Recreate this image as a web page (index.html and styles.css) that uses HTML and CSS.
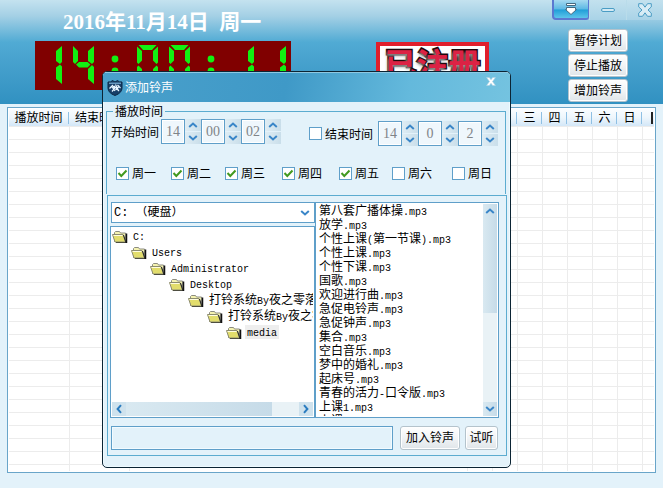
FILE: index.html
```html
<!DOCTYPE html>
<html lang="zh-CN">
<head>
<meta charset="utf-8">
<title>打铃系统</title>
<link rel="stylesheet" href="styles.css">
</head>
<body>
<svg class="defs" aria-hidden="true">
  <symbol id="up" viewBox="0 0 10 6"><path d="M1.200 5 5 1.600 8.800 5" fill="none" stroke="#3a86c8" stroke-width="2"/></symbol>
  <symbol id="down" viewBox="0 0 10 6"><path d="M1.200 1 5 4.400 8.800 1" fill="none" stroke="#3a86c8" stroke-width="2"/></symbol>
  <symbol id="left" viewBox="0 0 6 10"><path d="M5 1.200 1.600 5 5 8.800" fill="none" stroke="#2a7cc0" stroke-width="2"/></symbol>
  <symbol id="right" viewBox="0 0 6 10"><path d="M1 1.200 4.400 5 1 8.800" fill="none" stroke="#2a7cc0" stroke-width="2"/></symbol>
  <symbol id="folder" viewBox="0 0 16 13">
    <path d="M2.500 11.500v-9l1-1h4l1 1.500h5v9z" fill="#f4f2b0" stroke="#8c8c80"/>
    <path d="M14.500 3.500V12.500H4" fill="none" stroke="#111" stroke-width="1.500"/>
    <path d="M.5 4.500h10.500l2.500 7.500H3z" fill="#e2dd6c" stroke="#8c8c70"/>
    <path d="M1.500 5.500h9" stroke="#fffde0"/>
    <path d="M11.500 5l2.300 7" stroke="#222"/>
  </symbol>
  <symbol id="colon" viewBox="0 0 22 40"><circle cx="10" cy="14" r="3.400"/><circle cx="10" cy="26" r="3.400"/></symbol>
  <symbol id="one" viewBox="0 0 22 40"><path d="M21 1v16l-2 2-4-3V6zM19 19.500l2 2V39l-6-5V22.500z"/></symbol>
  <symbol id="four" viewBox="0 0 22 40"><path d="M21 1v16l-2 2-4-3V6zM19 20l2 2V39l-6-5V24zM0 1l5 5v10l-3 3-2-2zM6 17h8.500l3 2.500-3 3H6l-3-3z"/></symbol>
  <symbol id="zero" viewBox="0 0 22 40"><path d="M1.500 0h18L15 5H6zM0 1.500 5 6v9.500l-3.500 3.500L0 17.500zM21 1.500v16l-1.500 1.500-3.500-3.500V6zM1.500 20.500 5 24v9.500L0 38V22zM19.500 20.500 21 22v16l-5-4.500V24zM6 35h9l4.500 5h-18z"/></symbol>
</svg>

<header class="banner">
  <div class="clock">
    <h1 class="date">2016年11月14日&nbsp;&nbsp;周一</h1>
    <svg class="led" viewBox="0 0 256 49" role="img" aria-label="14:00:11">
      <g fill="#12f012">
        <use href="#one" x="6" y="4" width="22" height="40"/>
        <use href="#four" x="38" y="4" width="22" height="40"/>
        <use href="#colon" x="70" y="4" width="22" height="40"/>
        <use href="#zero" x="102" y="4" width="22" height="40"/>
        <use href="#zero" x="134" y="4" width="22" height="40"/>
        <use href="#colon" x="166" y="4" width="22" height="40"/>
        <use href="#one" x="198" y="4" width="22" height="40"/>
        <use href="#one" x="230" y="4" width="22" height="40"/>
      </g>
    </svg>
  </div>
  <div class="stamp">已注册</div>
  <div class="side">
    <div class="winbar">
      <button class="win menu" aria-label="菜单"><svg width="12" height="12" viewBox="0 0 12 12"><path d="M1.500.5h9v2h-9zM1.500 4.500h9v2h1L6 11.500.5 6.500h1z" fill="#fff" stroke="#456a80"/></svg></button>
      <button class="win" aria-label="最小化"><svg width="14" height="4" viewBox="0 0 14 4"><rect x=".5" y=".5" width="13" height="3" rx="1.500" fill="#d4eaf4" stroke="#4a9cc4"/></svg></button>
      <button class="win" aria-label="关闭"><svg width="14" height="14" viewBox="0 0 14 14"><path d="M.7.7h3.800L7 4.200 9.500.7h3.800v3.200L10 7l3.300 3.100v3.200H9.500L7 9.800 4.500 13.300H.7v-3.200L4 7 .7 3.900z" fill="#d8ecf5" stroke="#4a9cc4"/></svg></button>
    </div>
    <div class="actions">
      <button class="btn">暂停计划</button>
      <button class="btn">停止播放</button>
      <button class="btn">增加铃声</button>
    </div>
  </div>
</header>

<main class="panel">
  <table class="plan">
    <colgroup><col class="c-start"><col class="c-end"><col><col class="day"><col class="day"><col class="day"><col class="day"><col class="day"><col class="day"><col class="day"><col class="c-last"></colgroup>
    <thead><tr><th>播放时间</th><th>结束时间</th><th></th><th></th><th></th><th>三</th><th>四</th><th>五</th><th>六</th><th>日</th><th class="caret"></th></tr></thead>
    <tbody><tr><td></td><td></td><td></td><td></td><td></td><td></td><td></td><td></td><td></td><td></td><td></td></tr></tbody>
  </table>
</main>

<section class="dialog" role="dialog" aria-labelledby="dlg-title">
  <div class="titlebar">
    <svg class="shield" width="16" height="16" viewBox="0 0 16 16"><path d="M1 2q3 .5 4.500-1.500L8 2l2.500-1.500Q12 2.500 15 2v6q0 5-7 7.500Q1 13 1 8z" fill="#173f68" stroke="#0c2744"/><path d="M2 3.200h12" stroke="#8cc4e8"/><path d="M2.500 8.500l3-3 2 3-2.500 3M5 7l3 4M8.500 4.500l3 6M12.500 6l-4 4M7 6l5 5M10.500 5l3 3" stroke="#e8f6ff" stroke-width="1.200" fill="none"/></svg>
    <h2 id="dlg-title">添加铃声</h2>
    <button class="close" aria-label="关闭"><svg width="10" height="9" viewBox="0 0 10 9"><path d="M.5.5h2.800L5 2.700 6.700.5h2.800L6.500 4.500l3 4H6.700L5 6.300 3.300 8.500H.5l3-4z" fill="#fff" stroke="#a9d0e2" stroke-width=".6"/></svg></button>
  </div>
  <div class="body">
    <fieldset class="time">
      <legend>播放时间</legend>
      <div class="times">
        <div class="group">
          <label for="sh">开始时间</label>
          <div class="spins">
            <span class="spin"><input id="sh" value="14"><span class="arrows"><button aria-label="加"><svg><use href="#up"/></svg></button><button aria-label="减"><svg><use href="#down"/></svg></button></span></span>
            <span class="spin"><input aria-label="分" value="00"><span class="arrows"><button aria-label="加"><svg><use href="#up"/></svg></button><button aria-label="减"><svg><use href="#down"/></svg></button></span></span>
            <span class="spin"><input aria-label="秒" value="02"><span class="arrows"><button aria-label="加"><svg><use href="#up"/></svg></button><button aria-label="减"><svg><use href="#down"/></svg></button></span></span>
          </div>
        </div>
        <div class="group finish">
          <label class="check"><input type="checkbox">结束时间</label>
          <div class="spins">
            <span class="spin"><input aria-label="时" value="14"><span class="arrows"><button aria-label="加"><svg><use href="#up"/></svg></button><button aria-label="减"><svg><use href="#down"/></svg></button></span></span>
            <span class="spin"><input aria-label="分" value="0"><span class="arrows"><button aria-label="加"><svg><use href="#up"/></svg></button><button aria-label="减"><svg><use href="#down"/></svg></button></span></span>
            <span class="spin"><input aria-label="秒" value="2"><span class="arrows"><button aria-label="加"><svg><use href="#up"/></svg></button><button aria-label="减"><svg><use href="#down"/></svg></button></span></span>
          </div>
        </div>
      </div>
      <div class="days">
        <label class="check"><input type="checkbox" checked>周一</label>
        <label class="check"><input type="checkbox" checked>周二</label>
        <label class="check"><input type="checkbox" checked>周三</label>
        <label class="check"><input type="checkbox" checked>周四</label>
        <label class="check"><input type="checkbox" checked>周五</label>
        <label class="check"><input type="checkbox">周六</label>
        <label class="check"><input type="checkbox">周日</label>
      </div>
    </fieldset>

    <div class="files">
      <div class="browser">
        <div class="source">
          <select class="drive" aria-label="驱动器"><option>C: （硬盘）</option></select>
          <div class="tree">
            <ul>
              <li><svg><use href="#folder"/></svg><span class="name"><span class="en">C:</span></span></li>
              <li><svg><use href="#folder"/></svg><span class="name"><span class="en">Users</span></span></li>
              <li><svg><use href="#folder"/></svg><span class="name"><span class="en">Administrator</span></span></li>
              <li><svg><use href="#folder"/></svg><span class="name"><span class="en">Desktop</span></span></li>
              <li><svg><use href="#folder"/></svg><span class="name">打铃系统<span class="en">By</span>夜之零落</span></li>
              <li><svg><use href="#folder"/></svg><span class="name">打铃系统<span class="en">By</span>夜之零</span></li>
              <li><svg><use href="#folder"/></svg><span class="name picked"><span class="en">media</span></span></li>
            </ul>
            <div class="hscroll">
              <button aria-label="向左"><svg><use href="#left"/></svg></button>
              <div class="thumb"></div>
              <button aria-label="向右"><svg><use href="#right"/></svg></button>
            </div>
          </div>
        </div>
        <div class="songs">
          <ul>
            <li>第八套广播体操<span class="en">.mp3</span></li>
            <li>放学<span class="en">.mp3</span></li>
            <li>个性上课<span class="en">(</span>第一节课<span class="en">).mp3</span></li>
            <li>个性上课<span class="en">.mp3</span></li>
            <li>个性下课<span class="en">.mp3</span></li>
            <li>国歌<span class="en">.mp3</span></li>
            <li>欢迎进行曲<span class="en">.mp3</span></li>
            <li>急促电铃声<span class="en">.mp3</span></li>
            <li>急促钟声<span class="en">.mp3</span></li>
            <li>集合<span class="en">.mp3</span></li>
            <li>空白音乐<span class="en">.mp3</span></li>
            <li>梦中的婚礼<span class="en">.mp3</span></li>
            <li>起床号<span class="en">.mp3</span></li>
            <li>青春的活力<span class="en">-</span>口令版<span class="en">.mp3</span></li>
            <li>上课<span class="en">1.mp3</span></li>
            <li>上课</li>
          </ul>
          <div class="vscroll">
            <button aria-label="向上"><svg><use href="#up"/></svg></button>
            <div class="thumb"></div>
            <button aria-label="向下"><svg><use href="#down"/></svg></button>
          </div>
        </div>
      </div>
      <div class="footer">
        <input class="path" type="text" aria-label="铃声文件">
        <button class="btn">加入铃声</button>
        <button class="btn short">试听</button>
      </div>
    </div>
  </div>
</section>
</body>
</html>
```
FILE: styles.css
```css
* { box-sizing: border-box; }

body {
  margin: 0;
  min-height: 100vh;
  display: flex;
  flex-direction: column;
  position: relative;
  background: #e3f2fa;
  color: #000;
  font: 12px/14px "Noto Sans CJK SC", sans-serif;
}

button, input, select { font: inherit; color: inherit; margin: 0; padding: 0; }
button { border: 0; background: none; display: flex; align-items: center; justify-content: center; }
ul { list-style: none; margin: 0; padding: 0; }
h1, h2 { margin: 0; }
.defs { position: absolute; width: 0; height: 0; }
.en { font-family: "Liberation Mono", monospace; font-size: 10px; }

/* Banner */
.banner {
  display: flex;
  height: 104px;
  padding-left: 35px;
  background: linear-gradient(#c4e2ef 0, #a4d0e5 16px, #51abd4 42px, #48a2ce 60px, #3191c1 104px);
}
.clock { width: 256px; }
.date {
  height: 41px;
  padding: 12px 0 0 28px;
  color: #fff;
  font: bold 21px/20px "Liberation Serif", "Noto Sans CJK SC", serif;
  white-space: nowrap;
}
.led { display: block; width: 100%; height: 49px; background: #800000; }
.stamp {
  width: 113px;
  height: 46px;
  margin: 42px 0 0 85px;
  border: 4px solid #e01f2c;
  background: #fff;
  color: #dc2244;
  font: bold 32px/32px "Noto Sans CJK SC", sans-serif;
  text-align: center;
  white-space: nowrap;
  -webkit-text-stroke: 3px #1c0408;
  paint-order: stroke fill;
  text-shadow: -1px 2px 3px #999;
}
.side { flex: 1; display: flex; flex-direction: column; align-items: flex-end; }
.winbar { display: flex; height: 20px; }
.win { width: 37px; height: 20px; background: linear-gradient(#c3e1ee, #a9d3e7); border-left: 1px solid #b9dcea; }
.win.menu {
  background: linear-gradient(#a6d9f0, #5db9e4 50%, #219fd8 55%, #5cc4ea);
  border: solid #5b78d0;
  border-width: 0 1px 2px 2px;
  border-radius: 0 0 3px 4px;
}
.actions { display: grid; gap: 2px; padding: 9px 35px 0 0; }
.btn {
  width: 60px;
  height: 23px;
  padding-bottom: 2px;
  border: 1px solid #b4c3cc;
  border-radius: 3px;
  background: linear-gradient(#fff, #f1f4f6 50%, #dfe5e9);
  box-shadow: inset 0 0 0 1px #fff;
  white-space: nowrap;
}

/* Schedule */
.panel {
  flex: 1;
  display: flex;
  margin: 3px 7px 16px;
  padding: 1px 1px 1px;
  border: 1px solid #69a5c9;
  background: #fff;
}
.plan { width: 100%; table-layout: fixed; border-collapse: separate; border-spacing: 0; }
.c-start { width: 61px; }
.c-end { width: 60px; }
.day { width: 25px; }
.c-last { width: 11px; }
.plan th {
  height: 17px;
  padding: 0 2px 2px 0;
  font-weight: normal;
  text-align: center;
  white-space: nowrap;
  background:
    linear-gradient(#8fc0e4, #8fc0e4) right 1px center / 1px 12px no-repeat,
    linear-gradient(#fbfdff, #eef6fc 50%, #d3e7f8);
}
.plan th.caret { background: linear-gradient(#222, #222) right 1px center / 2px 12px no-repeat, linear-gradient(#fbfdff, #eef6fc 50%, #d3e7f8); }
.plan td { padding: 0; border-right: 1px solid #ececec; }
.plan td:last-child { border-right: 0; }
.plan tbody tr { height: 345px; background: repeating-linear-gradient(#ececec 0 1px, #fff 1px 13px); }

/* Dialog */
.dialog {
  position: absolute;
  top: 71px;
  left: 102px;
  right: 152px;
  border: 1px solid #0b2434;
  border-radius: 5px;
  background: #e3f2fa;
  box-shadow: inset 0 0 0 1px #eefaff;
  overflow: hidden;
}
.titlebar {
  display: flex;
  align-items: center;
  gap: 2px;
  height: 30px;
  padding: 0 12px 0 4px;
  border-top: 1px solid #8ec8e2;
  background: linear-gradient(100deg, #4aa0cb, #3f99c7 45%, #64b9dc 75%, #74c3e0);
}
.titlebar h2 { flex: 1; padding-bottom: 2px; color: #fff; font-size: 12px; font-weight: normal; }
.close { width: 14px; height: 14px; margin-bottom: 12px; }
.body { padding: 2px 3px 11px; }

.time {
  min-width: 0;
  margin: 0 1px 0 0;
  padding: 1px 0 14px;
  border: 1px solid #5cacd0;
  border-bottom: 0;
}
.time legend { margin-left: 6px; padding: 0 2px; height: 14px; line-height: 14px; }
.times { display: flex; justify-content: space-between; padding: 0 7px 0 4px; }
.group { display: flex; align-items: center; gap: 2px; height: 25px; white-space: nowrap; }
.group.finish { gap: 5px; margin-top: 2px; }
.spins { display: flex; }
.spin { display: flex; }
.spin input {
  width: 24px;
  height: 25px;
  border: 1px solid #5f9fc9;
  background: #eff7fc;
  box-shadow: inset 0 0 0 1px #fff;
  color: #808488;
  font: 14px/16px "Liberation Serif", serif;
  text-align: center;
}
.arrows { display: grid; grid-template-rows: 12px 12px; gap: 1px; width: 16px; }
.arrows button { background: linear-gradient(90deg, #dfedf4, #c9deea); }
.arrows svg, .vscroll svg { width: 10px; height: 6px; }
.check { display: flex; align-items: center; gap: 3px; height: 14px; white-space: nowrap; }
.check input {
  appearance: none;
  width: 13px;
  height: 13px;
  border: 1px solid #5f9fc9;
  background: #fff;
}
.check input:checked {
  background: #fff url("data:image/svg+xml,%3Csvg xmlns='http://www.w3.org/2000/svg' viewBox='0 0 11 11'%3E%3Cpath d='M1.500 5 4.300 8 9.500 2.500' fill='none' stroke='%23429a20' stroke-width='2'/%3E%3C/svg%3E") center / 11px 11px no-repeat;
}
.days {
  display: grid;
  grid-template-columns: 55fr 54fr 57fr 57fr 53fr 60fr 53fr;
  padding: 20px 0 0 9px;
}

.files {
  margin-left: 1px;
  margin-top: 1px;
  padding: 6px 7px 5px 2px;
  border: 1px solid #5cacd0;
}
.browser { display: grid; grid-template-columns: minmax(0, 205fr) minmax(0, 184fr); height: 216px; }
.source { display: flex; flex-direction: column; gap: 3px; min-height: 0; }
.drive {
  appearance: none;
  height: 21px;
  margin-left: 1px;
  padding: 0 16px 0 2px;
  border: 1px solid #5f9fc9;
  border-radius: 0;
  background: #fff url("data:image/svg+xml,%3Csvg xmlns='http://www.w3.org/2000/svg' viewBox='0 0 10 6'%3E%3Cpath d='M1.200 1 5 4.400 8.800 1' fill='none' stroke='%233a86c8' stroke-width='2'/%3E%3C/svg%3E") right 4px center / 10px 6px no-repeat;
  font-family: "Liberation Mono", "Noto Sans CJK SC", monospace;
}
.tree {
  flex: 1;
  display: flex;
  flex-direction: column;
  min-height: 0;
  padding: 1px;
  border: 1px solid #5f9fc9;
  background: #fff;
}
.tree ul { flex: 1; min-height: 0; overflow: hidden; }
.tree li { display: flex; align-items: center; gap: 3px; height: 16px; white-space: nowrap; }
.tree li svg { flex: none; width: 16px; height: 13px; }
.tree li:nth-child(2) { padding-left: 19px; }
.tree li:nth-child(3) { padding-left: 38px; }
.tree li:nth-child(4) { padding-left: 57px; }
.tree li:nth-child(5) { padding-left: 76px; }
.tree li:nth-child(6) { padding-left: 95px; }
.tree li:nth-child(7) { padding-left: 114px; }
.name { padding: 0 2px; height: 14px; line-height: 12px; }
.picked { background: #eee; }
.hscroll { display: flex; height: 14px; background: #e9f2f6; }
.hscroll .thumb { width: 146px; margin-right: auto; background: linear-gradient(90deg, #d9e9f1, #c6dbe8); }
.hscroll button { width: 14px; background: #cfe2ed; }
.hscroll svg { width: 6px; height: 10px; }
.songs {
  display: flex;
  min-height: 0;
  padding: 1px;
  border: 1px solid #5f9fc9;
  background: #fff;
}
.songs ul { flex: 1; min-width: 0; padding-left: 2px; overflow: hidden; }
.songs li { height: 14px; line-height: 12px; white-space: nowrap; }
.vscroll { display: flex; flex-direction: column; width: 14px; background: #e9f2f6; }
.vscroll .thumb { height: 95px; margin-bottom: auto; background: linear-gradient(90deg, #d9e9f1, #c6dbe8); }
.vscroll button { height: 14px; background: linear-gradient(90deg, #d9e9f1, #c6dbe8); }
.footer { display: flex; gap: 5px; padding: 8px 1px 0; }
.path { flex: 1; min-width: 0; height: 24px; margin-right: 2px; border: 1px solid #5f9fc9; background: #e3f2fa; box-shadow: inset 0 0 0 1px #f2fbff; }
.footer .btn { height: 24px; }
.btn.short { width: 33px; }
```
